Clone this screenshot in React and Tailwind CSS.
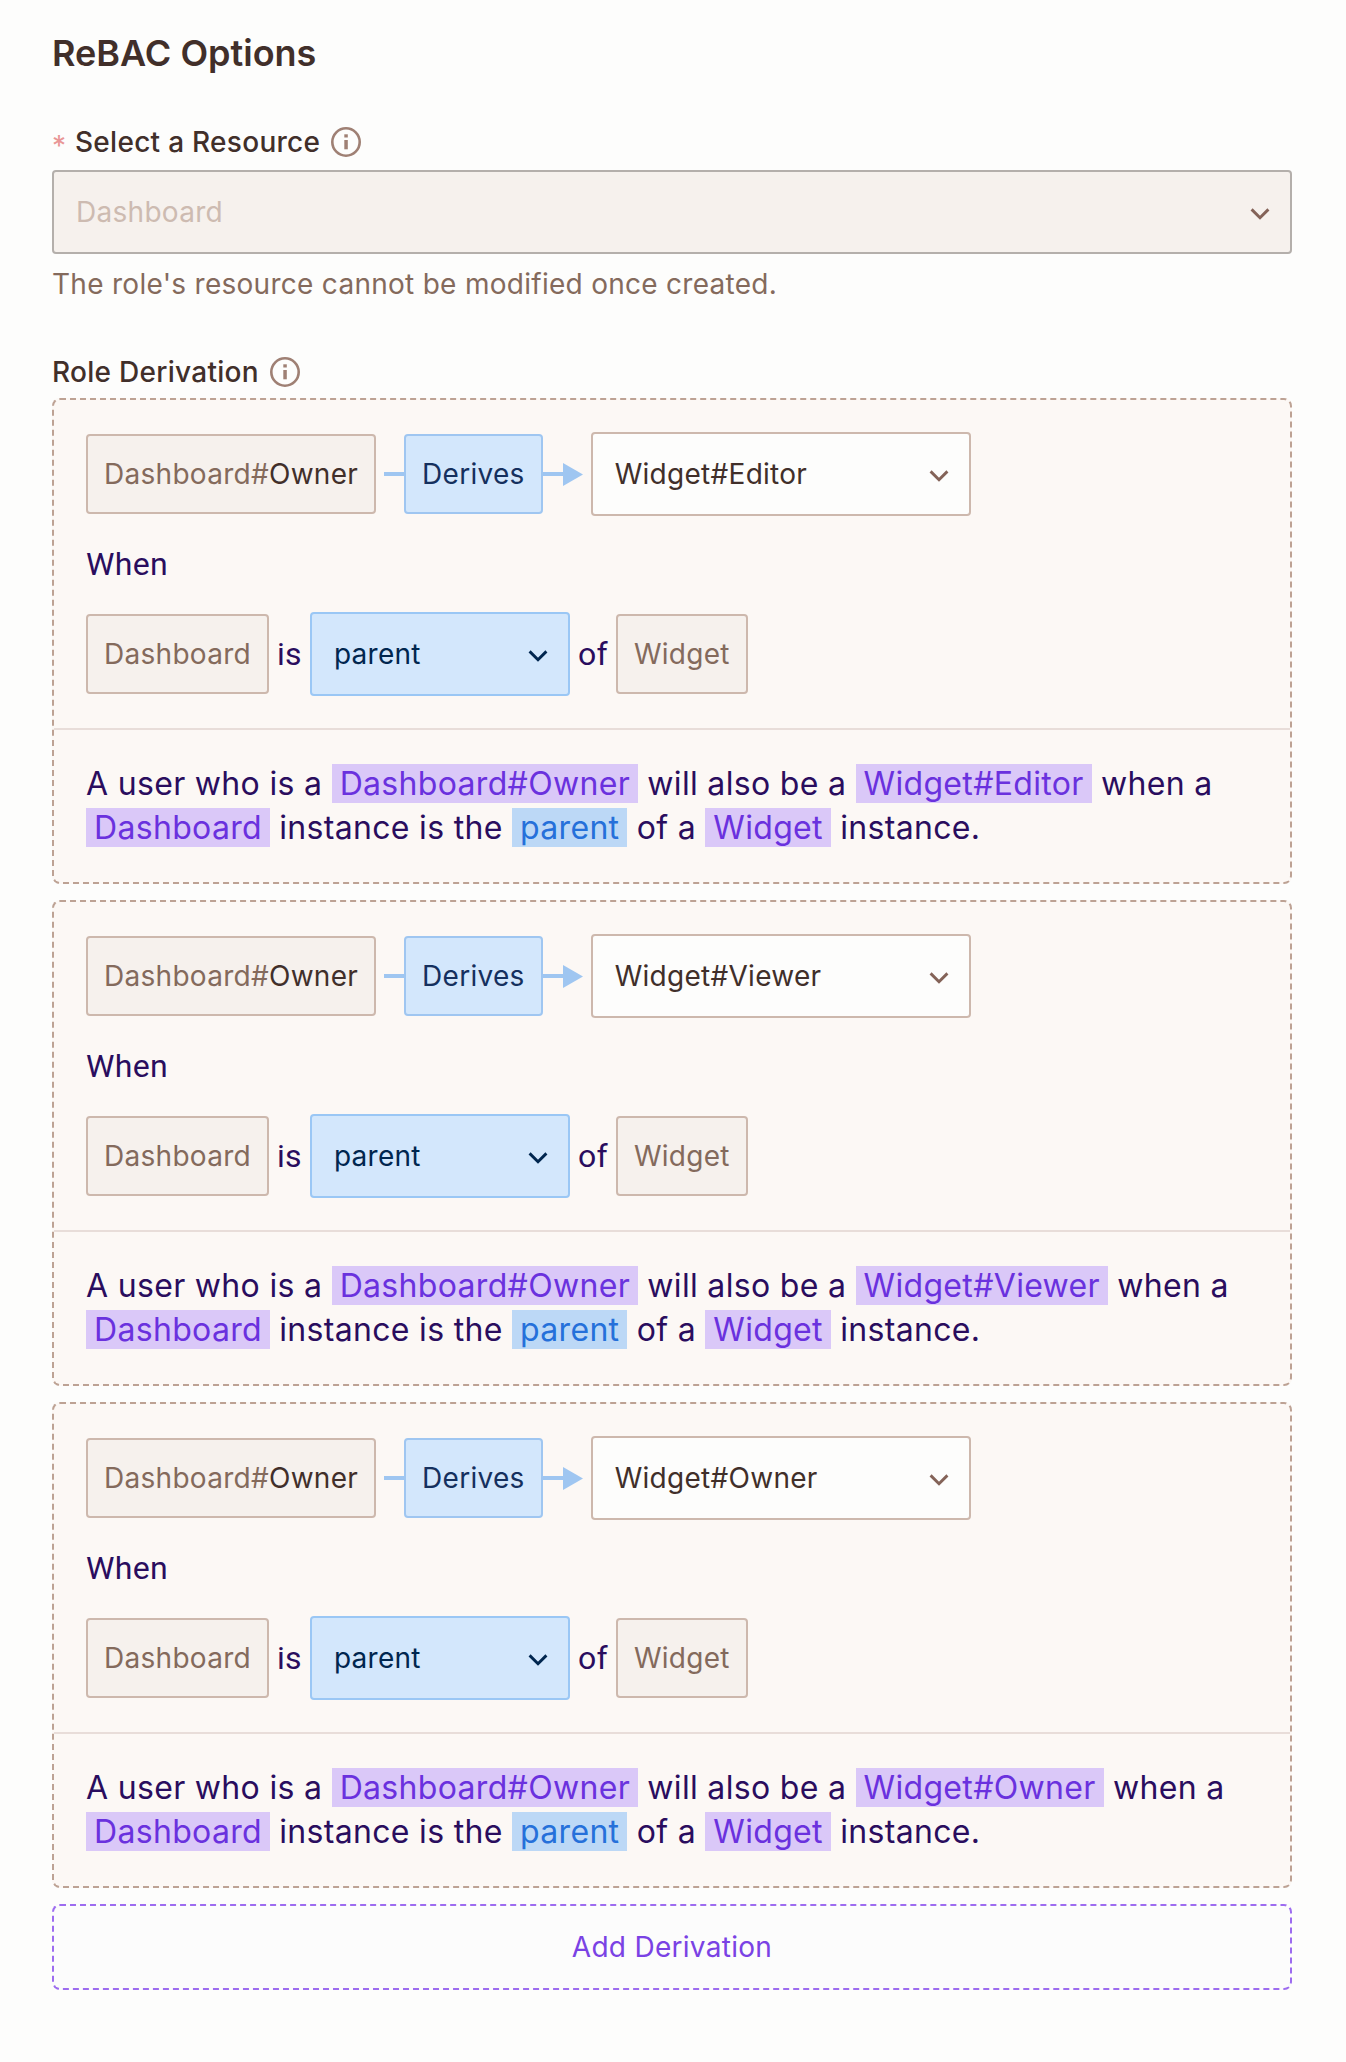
const derivations = ["Editor", "Viewer", "Owner"];

function InfoIcon() {
  return (
    <svg className="h-[30px] w-[30px] shrink-0" viewBox="0 0 30 30" fill="none">
      <circle cx="15" cy="15" r="13.7" stroke="#9f8074" strokeWidth="2.6" />
      <rect x="13.3" y="7.3" width="3.5" height="3.2" fill="#9f8074" />
      <rect x="13.3" y="13" width="3.5" height="9.3" fill="#9f8074" />
    </svg>
  );
}

function Chevron({ className = "text-[#846358]" }) {
  return (
    <svg className={`mt-1 h-3 w-5 shrink-0 ${className}`} viewBox="0 0 20 12" fill="none">
      <path d="M1.6 1.4 10 9.8l8.4-8.4" stroke="currentColor" strokeWidth="2.9" />
    </svg>
  );
}

function Chip({ children }) {
  return (
    <span className="flex h-20 items-center rounded-[4px] border-2 border-[#cdb8ad] bg-[#f6f1ed] px-4 text-[#846a5c]">
      {children}
    </span>
  );
}

function Mark({ children }) {
  return <span className="bg-[#dac8f8] px-2 text-[#6a31de]">{children}</span>;
}

function DerivationCard({ role }) {
  return (
    <section className="rounded-[8px] border-2 border-dashed border-[#bda294] bg-[#fcf8f5]">
      <div className="flex flex-col gap-6 border-b-2 border-[#e8ddd9] p-8">
        <div className="flex items-center">
          <Chip>
            Dashboard#<span className="text-[#412f2a]">Owner</span>
          </Chip>
          <span className="ml-2 h-1 w-5 bg-[#9fc6f1]" />
          <span className="flex h-20 items-center rounded-[4px] border-2 border-[#9fc6f1] bg-[#d3e7fc] px-4 text-[#15305e]">
            Derives
          </span>
          <span className="h-1 w-5 bg-[#9fc6f1]" />
          <svg className="mr-2 h-[23px] w-5" viewBox="0 0 20 23">
            <path d="M0 0 20 11.5 0 23Z" fill="#9fc6f1" />
          </svg>
          <div className="flex h-[84px] w-[380px] items-center justify-between rounded-[4px] border-2 border-[#cdb8ad] bg-[#fdfdfc] pr-5 pl-[22px] text-[#412f2a]">
            Widget#{role}
            <Chevron />
          </div>
        </div>
        <div className="font-[Roboto,sans-serif] text-[32px] leading-[48px] tracking-[0.32px] text-[#2a0d5e]">
          When
        </div>
        <div className="flex items-center gap-2">
          <Chip>Dashboard</Chip>
          <span className="font-[Roboto,sans-serif] text-[32px] leading-[48px] tracking-[0.32px] text-[#2a0d5e]">is</span>
          <div className="flex h-[84px] w-[260px] items-center justify-between rounded-[4px] border-2 border-[#9ac7f5] bg-[#d3e7fc] pr-5 pl-[22px] text-[#00264f]">
            parent
            <Chevron className="text-[#00264f]" />
          </div>
          <span className="font-[Roboto,sans-serif] text-[32px] leading-[48px] tracking-[0.32px] text-[#2a0d5e]">of</span>
          <Chip>Widget</Chip>
        </div>
      </div>
      <p className="p-8 text-[32px] leading-[44px] tracking-[0.32px] text-[#2a0d5e]">
        A user who is a <Mark>Dashboard#Owner</Mark> will also be a <Mark>Widget#{role}</Mark> when a{" "}
        <Mark>Dashboard</Mark> instance is the{" "}
        <span className="bg-[#bcd8f6] px-2 text-[#2570da]">parent</span> of a <Mark>Widget</Mark> instance.
      </p>
    </section>
  );
}

export default function App() {
  return (
    <main className="min-h-[2062px] bg-[#fdfdfc] pt-[31px] pr-[54px] pl-[52px] font-[Inter,sans-serif] text-[28px] tracking-[0.28px] text-[#412f2a]">
      <h1 className="text-[36px] leading-[44px] font-semibold tracking-normal">ReBAC Options</h1>

      <div className="mt-[45px] flex h-11 items-center font-medium">
        <span className="w-[23px] pt-[7px] font-normal text-[#e99696]">*</span>
        <span className="mr-[11px]">Select a Resource</span>
        <InfoIcon />
      </div>
      <div className="mt-1.5 flex h-[84px] items-center justify-between rounded-[4px] border-2 border-[#b4afab] bg-[#f6f1ed] pr-5 pl-[22px] text-[#cdbbb1]">
        Dashboard
        <Chevron />
      </div>
      <p className="mt-2.5 leading-10 text-[#846a5c]">The role's resource cannot be modified once created.</p>

      <div className="mt-12 flex h-10 items-center font-medium">
        <span className="mr-[11px]">Role Derivation</span>
        <InfoIcon />
      </div>
      <div className="mt-1.5 flex flex-col gap-4">
        {derivations.map((role) => (
          <DerivationCard key={role} role={role} />
        ))}
        <button className="h-[86px] rounded-[8px] border-2 border-dashed border-[#9d6cf0] bg-[#fcfcfc] tracking-[0.28px] text-[#7a42e4]">
          Add Derivation
        </button>
      </div>
    </main>
  );
}
